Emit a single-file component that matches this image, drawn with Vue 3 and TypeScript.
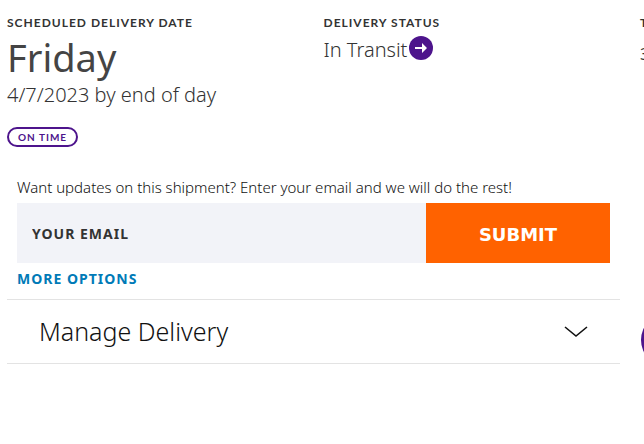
<script setup lang="ts">
import { ref } from 'vue'

const email = ref('')
const open = ref(false)
</script>

<template>
  <main class="page">
    <section class="summary">
      <div class="cell">
        <h2 class="label">SCHEDULED DELIVERY DATE</h2>
        <p class="day">Friday</p>
        <p class="value date">4/7/2023 by end of day</p>
        <span class="badge">ON TIME</span>
      </div>
      <div class="cell">
        <h2 class="label">DELIVERY STATUS</h2>
        <p class="value status">
          <span class="status-text">In Transit</span>
          <svg class="status-icon" viewBox="0 0 24 24" aria-hidden="true">
            <circle cx="12" cy="12" r="12" fill="#4d148c" />
            <path d="M6 11h7V7l5 5-5 5v-4H6z" fill="#fff" />
          </svg>
        </p>
      </div>
      <div class="cell peek">
        <h2 class="label">T</h2>
        <p class="code">3</p>
      </div>
    </section>

    <div class="body">
      <div class="panel">
        <form class="updates" @submit.prevent>
          <label class="prompt" for="email">Want updates on this shipment? Enter your email and we will do the rest!</label>
          <div class="row">
            <input id="email" v-model="email" class="email" type="email" placeholder="YOUR EMAIL" />
            <button class="submit" type="submit">SUBMIT</button>
          </div>
          <a class="more" href="#">MORE OPTIONS</a>
        </form>
        <button class="manage" type="button" :aria-expanded="open" @click="open = !open">
          <span class="manage-text">Manage Delivery</span>
          <svg class="chevron" viewBox="0 0 24 12" aria-hidden="true">
            <path d="M1 1l11 9 11-9" fill="none" stroke="#111" stroke-width="1.6" />
          </svg>
        </button>
      </div>
      <div class="aside">
        <div class="marker"></div>
      </div>
    </div>
  </main>
</template>

<style>
body {
  margin: 0;
  background: #fff;
}
</style>

<style scoped>
.page {
  box-sizing: border-box;
  padding: 16px 0 0 7px;
  overflow: hidden;
  color: #333;
  font-family: "Noto Sans", "Open Sans", sans-serif;
}
h2,
p {
  margin: 0;
}
.summary {
  display: grid;
  grid-template-columns: minmax(0, 1fr) minmax(0, 1fr) 4px;
}
.cell {
  white-space: nowrap;
}
.label {
  font-family: Lato, "Noto Sans", sans-serif;
  font-size: 12px;
  line-height: 14px;
  font-weight: 700;
  letter-spacing: 1px;
}
.day {
  padding-top: 3px;
  font-size: 38px;
  line-height: 48px;
  font-weight: 400;
  color: #444;
}
.value {
  font-size: 20px;
  line-height: 26px;
  font-weight: 300;
}
.date {
  padding-top: 1px;
}
.status {
  display: flex;
  align-items: center;
  gap: 2px;
  padding-top: 5px;
}
.status-text {
  padding-top: 2px;
}
.status-icon {
  width: 24px;
  height: 24px;
  margin-bottom: 2px;
}
.code {
  padding-top: 12px;
  font-size: 16px;
  line-height: 24px;
}
.badge {
  display: inline-block;
  box-sizing: border-box;
  margin-top: 19px;
  padding: 0 9px;
  border: 2px solid #4d148c;
  border-radius: 10px;
  color: #4d148c;
  font-family: Lato, "Noto Sans", sans-serif;
  font-size: 10px;
  line-height: 16px;
  font-weight: 700;
  letter-spacing: 1px;
  vertical-align: top;
}
.body {
  display: grid;
  grid-template-columns: minmax(0, 1fr) 3px;
  column-gap: 21px;
  padding-top: 29px;
}
.updates {
  padding: 0 10px;
}
.prompt {
  display: block;
  padding-bottom: 5px;
  color: #111;
  font-size: 15px;
  line-height: 22px;
  font-weight: 300;
}
.row {
  display: grid;
  grid-template-columns: minmax(0, 409fr) minmax(0, 184fr);
  height: 60px;
}
.email {
  min-width: 0;
  padding: 0 15px;
  border: 0;
  border-radius: 0;
  background: #f2f3f8;
  color: #333;
  font: 700 14px "Noto Sans", sans-serif;
  letter-spacing: 1px;
}
.email::placeholder {
  color: #333;
  opacity: 1;
}
.submit {
  padding: 3px 0 0;
  border: 0;
  background: #ff6200;
  color: #fff;
  font: 700 18px "DejaVu Sans", sans-serif;
}
.more {
  display: inline-block;
  padding: 6px 0 10px;
  color: #007ab7;
  font-size: 14px;
  line-height: 20px;
  font-weight: 700;
  letter-spacing: 1px;
  text-decoration: none;
  vertical-align: top;
}
.manage {
  display: flex;
  align-items: center;
  justify-content: space-between;
  box-sizing: border-box;
  width: 100%;
  height: 65px;
  padding: 0 32px;
  border: solid #e3e3e3;
  border-width: 1px 0;
  background: none;
  color: #111;
  font: 300 25px "Noto Sans", sans-serif;
}
.manage-text {
  padding-bottom: 2px;
}
.chevron {
  width: 24px;
  height: 12px;
}
.aside {
  padding-top: 137px;
  overflow: hidden;
}
.marker {
  width: 54px;
  height: 54px;
  border-radius: 50%;
  background: #4d148c;
}
</style>
